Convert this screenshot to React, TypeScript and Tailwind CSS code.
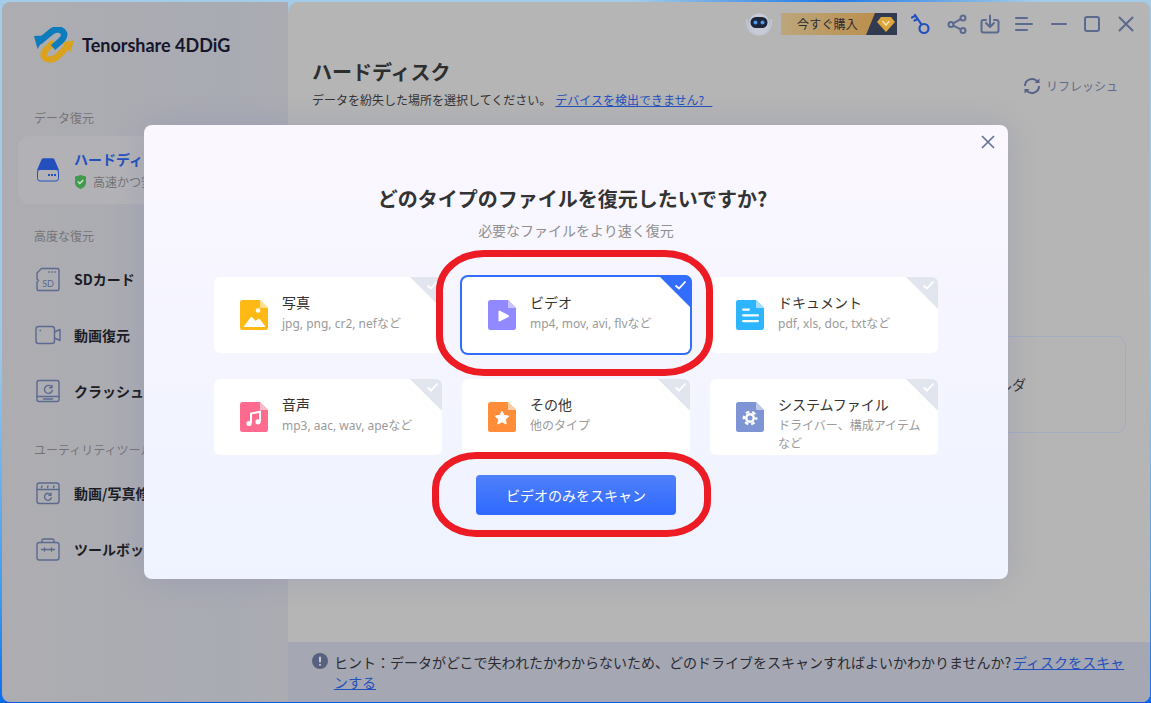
import React from "react";

const F = "[font-family:'Noto_Sans_CJK_JP','Noto_Sans',sans-serif]";

function FileIcon({ fill, fold, children }: { fill: string; fold: string; children: React.ReactNode }) {
  return (
    <svg width="28" height="30" viewBox="0 0 28 30" className="shrink-0 mt-[23px] ml-[26px]">
      <path d="M2.5 0H20L28 8V27.5A2.5 2.5 0 0 1 25.500 30H2.500A2.500 2.500 0 0 1 0 27.500V2.500A2.500 2.500 0 0 1 2.500 0Z" fill={fill} />
      <path d="M20 0L28 8H20Z" fill={fold} />
      {children}
    </svg>
  );
}

const icons: Record<string, React.ReactNode> = {
  photo: (
    <FileIcon fill="#ffb914" fold="#ffdf8e">
      <circle cx="18" cy="10.500" r="2.300" fill="#fff" />
      <path d="M3.500 27L10.500 17.500C11 16.800 12 16.800 12.500 17.500L15.500 21L18 19C18.500 18.600 19.200 18.600 19.700 19.100L25 26C25.300 26.500 25 27 24.500 27Z" fill="#fff" />
    </FileIcon>
  ),
  video: (
    <FileIcon fill="#9189ff" fold="#c9c4ff">
      <path d="M10.500 11.500C10.500 10.700 11.300 10.300 12 10.700L20.500 15.200C21.200 15.600 21.200 16.500 20.500 16.900L12 21.300C11.300 21.700 10.500 21.300 10.500 20.500Z" fill="#fff" />
    </FileIcon>
  ),
  doc: (
    <FileIcon fill="#2db5ff" fold="#a4dfff">
      <rect x="6" y="8.500" width="8" height="2.200" rx="1.100" fill="#fff" />
      <rect x="6" y="14.300" width="17" height="2.200" rx="1.100" fill="#fff" />
      <rect x="6" y="20" width="17" height="2.200" rx="1.100" fill="#fff" />
    </FileIcon>
  ),
  audio: (
    <FileIcon fill="#ff6b8f" fold="#ffbccb">
      <path d="M11 21V11.500L20 9.800V19.500" fill="none" stroke="#fff" strokeWidth="2" />
      <circle cx="9" cy="21.500" r="2.600" fill="#fff" />
      <circle cx="18" cy="19.800" r="2.600" fill="#fff" />
    </FileIcon>
  ),
  other: (
    <FileIcon fill="#ff8c38" fold="#ffcda6">
      <path d="M14 9.300L16.100 13.400L20.700 14.100L17.400 17.400L18.200 22L14 19.800L9.800 22L10.600 17.400L7.300 14.100L11.900 13.400Z" fill="#fff" stroke="#fff" strokeLinejoin="round" />
    </FileIcon>
  ),
  system: (
    <FileIcon fill="#7f94d4" fold="#bfcaea">
      <circle cx="14" cy="16" r="5" fill="#fff" />
      <circle cx="14" cy="16" r="6.200" fill="none" stroke="#fff" strokeWidth="2.400" strokeDasharray="3.500 2.990" strokeDashoffset="1.750" />
      <circle cx="14" cy="16" r="2.500" fill="#7f94d4" />
    </FileIcon>
  ),
};

function Card({ icon, title, desc, selected }: { icon: string; title: string; desc: string; selected?: boolean }) {
  return (
    <div className={`relative flex h-[76px] rounded-[6px] bg-white ${selected ? "ring-2 ring-[#336dff]" : ""}`}>
      {icons[icon]}
      <div className="ml-[14px] mt-[15px] w-[148px]">
        <div className="text-[14px] leading-[20px] text-[#333333]">{title}</div>
        <div className="mt-[3px] text-[12px] leading-[18px] text-[#9a9a9a] [font-family:'Noto_Sans','Noto_Sans_CJK_JP',sans-serif]">{desc}</div>
      </div>
      {selected ? (
        <div className="absolute -right-[2px] -top-[2px] h-[34px] w-[34px] rounded-tr-[7px] bg-[#336dff] [clip-path:polygon(0_0,100%_0,100%_100%)]" />
      ) : (
        <div className="absolute right-0 top-0 h-[32px] w-[32px] rounded-tr-[6px] bg-[#e1e5ee] [clip-path:polygon(0_0,100%_0,100%_100%)]" />
      )}
      <svg width="13" height="10" viewBox="0 0 13 10" className="absolute right-[3px] top-[3px]">
        <path d="M1.500 5.500L5 8.500L11.500 1.500" fill="none" stroke="#fff" strokeWidth="1.800" />
      </svg>
    </div>
  );
}

const S = { fill: "none", stroke: "#5b6a8f", strokeWidth: 1.4, strokeLinecap: "round" as const, strokeLinejoin: "round" as const };

function NavIcon({ children }: { children: React.ReactNode }) {
  return (
    <svg width="26" height="26" viewBox="0 0 26 26" className="shrink-0 overflow-visible" {...S}>
      {children}
    </svg>
  );
}

function NavRow({ label, icon }: { label: string; icon: React.ReactNode }) {
  return (
    <div className="flex h-[56px] items-center gap-[14px] pl-[32px]">
      <NavIcon>{icon}</NavIcon>
      <span className="text-[14px] font-bold text-[#1c1c24]">{label}</span>
    </div>
  );
}

function Logo() {
  return (
    <svg width="40" height="36" viewBox="0 0 40 36" className="shrink-0">
      <path d="M36 17L24 29C20 33 12.500 34 10 29.500C8.500 26 11 23.500 14 20.500L20 15" fill="none" stroke="#d9a31f" strokeWidth="6.500" />
      <path d="M40 13.500L27 15.500L36.500 25Z" fill="#d9a31f" />
      <path d="M5 15L17 5C21 1.500 28 1.500 30 6.500C31 10 28.500 12.500 25.500 15L19 20.500" fill="none" stroke="#0c7cbd" strokeWidth="6.500" />
      <path d="M0 9L12 8.500L3.500 22Z" fill="#0c7cbd" />
    </svg>
  );
}

function Sidebar() {
  return (
    <div className="flex w-[286px] shrink-0 flex-col bg-[linear-gradient(90deg,#adadb1,#a9abb3_80%,#abacb2)]">
      <div className="flex items-center gap-[8px] pl-[32px] pt-[25px]">
        <Logo />
        <span className="text-[18px] font-bold text-[#15152b] [font-family:'Lato','Noto_Sans',sans-serif]">Tenorshare 4DDiG</span>
      </div>
      <div className="mt-[46px] pl-[32px] text-[12px] leading-[18px] text-[#747478]">データ復元</div>
      <div className="ml-[16px] mr-[8px] mt-[9px] flex h-[68px] items-center gap-[15px] rounded-[12px] bg-[#b2b2b6] pl-[19px]">
        <svg width="22" height="24" viewBox="0 0 22 24" className="shrink-0">
          <path d="M4.500 1.500C5 .7 5.800 .3 6.700 .3H15.300C16.200 .3 17 .7 17.500 1.500L22 12H0Z" fill="#2350bd" />
          <rect x=".5" y="11.500" width="21" height="11.500" rx="2.500" fill="#b3b3b7" stroke="#2350bd" />
          <rect x="11" y="16" width="2" height="2" fill="#2350bd" />
          <rect x="14" y="16" width="2" height="2" fill="#2350bd" />
          <rect x="17" y="16" width="2" height="2" fill="#2350bd" />
        </svg>
        <div>
          <div className="text-[14px] font-bold leading-[20px] text-[#2350bd]">ハードディスク</div>
          <div className="mt-[4px] flex items-center gap-[6px] text-[12px] leading-[18px] text-[#737377]">
            <svg width="13" height="14" viewBox="0 0 13 14">
              <path d="M1 1.500L6.500 0L12 1.500V8C12 11 9 13 6.500 14C4 13 1 11 1 8Z" fill="#429a4f" />
              <path d="M3.800 6.500L5.800 8.500L9.300 5" fill="none" stroke="#cfe6d2" strokeWidth="1.300" />
            </svg>
            高速かつ安全
          </div>
        </div>
      </div>
      <div className="mt-[23px] pl-[32px] text-[12px] leading-[18px] text-[#747478]">高度な復元</div>
      <div className="mt-[6px]">
        <NavRow
          label="SDカード"
          icon={
            <>
              <path d="M7.500 2.500H23.500A1.500 1.500 0 0 1 25 4V23A1.500 1.500 0 0 1 23.500 24.500H4.500A1.500 1.500 0 0 1 3 23V16L4.500 14.500L3 13V7Z" />
              <path d="M15 6h.5M18 6h.5M21 6h.5" />
              <text x="14" y="20.500" textAnchor="middle" fontSize="9" fontFamily="Lato" fill="#5b6a8f" stroke="none">SD</text>
            </>
          }
        />
        <NavRow
          label="動画復元"
          icon={
            <>
              <rect x="2" y="4.500" width="18.500" height="17" rx="2.500" />
              <path d="M20.500 10L26 7.500V18.500L20.500 16" />
              <path d="M6 8.500h.5" />
            </>
          }
        />
        <NavRow
          label="クラッシュPC"
          icon={
            <>
              <rect x="3" y="2.500" width="22" height="21" rx="2" />
              <path d="M3 18.500H25M9.500 21H18.500" />
              <path d="M18 9.500A4 4 0 1 0 18.300 12.500M18 7.500V9.800H15.700" />
            </>
          }
        />
      </div>
      <div className="mt-[22px] pl-[32px] text-[12px] leading-[18px] text-[#747478]">ユーティリティツール</div>
      <div className="mt-[6px]">
        <NavRow
          label="動画/写真修復"
          icon={
            <>
              <rect x="3" y="3" width="22" height="20.500" rx="2.500" />
              <path d="M3 9.500H25M8 6l-.5 1.500M14 6l-.5 1.500M20 6l-.5 1.500" />
              <path d="M17 15A3.500 3.500 0 1 0 17.300 18M17 13.200V15.300H14.900" />
            </>
          }
        />
        <NavRow
          label="ツールボックス"
          icon={
            <>
              <rect x="3" y="6.500" width="22" height="17.500" rx="2.500" />
              <path d="M8 6.500V4.500C8 3.500 8.800 3 9.500 3H18.500C19.200 3 20 3.500 20 4.500V6.500" />
              <path d="M7.500 13.500H20.500M10.500 12V15M17.500 12V15" />
            </>
          }
        />
      </div>
    </div>
  );
}

const T = { fill: "none", stroke: "#5b6a8f", strokeWidth: 2, strokeLinecap: "round" as const, strokeLinejoin: "round" as const };

function TopBar() {
  return (
    <div className="flex h-[44px] shrink-0 items-center pr-[16px]">
      <div className="ml-auto" />
      <svg width="28" height="26" viewBox="0 0 28 26" className="mr-[8px]">
        <path d="M2 8C1 14 3 23 14 24C25 23 27 14 26 8" fill="none" stroke="#c4c8d6" strokeWidth="1.500" />
        <circle cx="14" cy="13" r="10.500" fill="#c7cbd8" />
        <rect x="5.500" y="6" width="17" height="11" rx="5.500" fill="#1d2338" />
        <circle cx="10.500" cy="11.500" r="2" fill="#4d9be8" />
        <circle cx="17.500" cy="11.500" r="2" fill="#4d9be8" />
      </svg>
      <div className="relative flex h-[22px] w-[116px] items-center bg-[linear-gradient(90deg,#bca67c,#bb8a42)] pl-[16px] text-[12px] tracking-[.2px] text-[#2b2b33]">
        今すぐ購入
        <div className="absolute inset-y-0 right-0 w-[31px] bg-[#323a50] [clip-path:polygon(9px_0,100%_0,100%_100%,0_100%)]" />
        <svg width="18" height="16" viewBox="0 0 18 16" className="absolute right-[2px] top-[3px]">
          <path d="M4 1H14L18 6L9 16L0 6Z" fill="#dca43c" />
          <path d="M5.500 5L9 9L12.500 5" fill="none" stroke="#f8e2b0" strokeWidth="1.500" />
        </svg>
      </div>
      <svg width="20" height="22" viewBox="0 0 20 22" className="ml-[14px]" fill="none" stroke="#2350bd" strokeWidth="2.200" strokeLinecap="round">
        <circle cx="13" cy="15.500" r="4.500" />
        <path d="M10.500 11.500L4 2M4 3L1 4.500M6.500 6L3.500 7.500" />
      </svg>
      <svg width="20" height="20" viewBox="0 0 20 20" className="ml-[16px]" {...T}>
        <circle cx="16" cy="4" r="2.500" />
        <circle cx="4" cy="10.500" r="2.500" />
        <circle cx="16" cy="16.500" r="2.500" />
        <path d="M6.200 9.300L13.800 5.200M6.200 11.700L13.800 15.300" />
      </svg>
      <svg width="20" height="20" viewBox="0 0 20 20" className="ml-[13px]" {...T}>
        <path d="M6 6H3.500A2 2 0 0 0 1.500 8V16.500A2 2 0 0 0 3.500 18.500H16.500A2 2 0 0 0 18.500 16.500V8A2 2 0 0 0 16.500 6H14" />
        <path d="M10 1.500V12.500M6 9L10 13L14 9" />
      </svg>
      <svg width="18" height="16" viewBox="0 0 18 16" className="ml-[15px]" {...T}>
        <path d="M1 2H12M1 8H17M1 14H12" />
      </svg>
      <svg width="16" height="16" viewBox="0 0 16 16" className="ml-[18px]" {...T}>
        <path d="M1 8H15" />
      </svg>
      <svg width="16" height="16" viewBox="0 0 16 16" className="ml-[17px]" {...T}>
        <rect x="1" y="1" width="14" height="14" rx="2" />
      </svg>
      <svg width="16" height="16" viewBox="0 0 16 16" className="ml-[18px]" {...T}>
        <path d="M1.500 1.500L14.500 14.500M14.500 1.500L1.500 14.500" />
      </svg>
    </div>
  );
}

function Main() {
  return (
    <div className="flex min-w-0 flex-1 flex-col rounded-tl-[10px] bg-[#b5b5b5]">
      <TopBar />
      <div className="flex items-start justify-between pl-[24px] pr-[32px] pt-[12px]">
        <div>
          <div className="text-[20px] font-bold leading-[28px] text-[#2e2e2e]">ハードディスク</div>
          <div className="mt-[5px] text-[12px] leading-[18px] text-[#333333]">
            データを紛失した場所を選択してください。
            <span className="ml-[4px] whitespace-pre text-[#2350bd] underline">デバイスを検出できません?   </span>
          </div>
        </div>
        <div className="mt-[19px] flex items-center gap-[5px] text-[12px] text-[#5f6b88]">
          <svg width="18" height="18" viewBox="0 0 18 18" fill="none" stroke="#556385" strokeWidth="2">
            <path d="M2 9A7 7 0 0 1 14.500 4.700M16 9A7 7 0 0 1 3.500 13.300" />
            <path d="M11.500 6H16.500V1.500Z" fill="#556385" stroke="none" />
            <path d="M6.500 12H1.500V16.500Z" fill="#556385" stroke="none" />
          </svg>
          リフレッシュ
        </div>
      </div>
      <div className="mr-[24px] ml-auto mt-[227px] flex h-[97px] w-[278px] items-center rounded-[10px] border border-[#a5acc2] pl-[121px] text-[14px] text-[#333333]">
        フォルダ
      </div>
      <div className="mt-auto flex h-[60px] items-start gap-[6px] bg-[#a5a8b2] pl-[24px] pr-[22px] pt-[10px] text-[14px] leading-[20px] text-[#2b2b33]">
        <svg width="16" height="16" viewBox="0 0 16 16" className="mt-[1px] shrink-0">
          <circle cx="8" cy="8" r="8" fill="#56617f" />
          <rect x="7" y="3.500" width="2" height="6" rx="1" fill="#c7cad3" />
          <rect x="7" y="10.800" width="2" height="2" rx="1" fill="#c7cad3" />
        </svg>
        <div>
          ヒント：データがどこで失われたかわからないため、どのドライブをスキャンすればよいかわかりませんか?
          <span className="ml-[2px] text-[#2350bd] underline">ディスクをスキャンする</span>
        </div>
      </div>
    </div>
  );
}

function Modal() {
  return (
    <div className="absolute left-[144px] top-[125px] flex h-[454px] w-[864px] flex-col items-stretch rounded-[8px] bg-[linear-gradient(180deg,#fbf7ff,#eef3ff)] shadow-[0_0_30px_rgba(100,110,170,0.22)]">
      <svg width="14" height="14" viewBox="0 0 14 14" className="absolute right-[13px] top-[10px]" fill="none" stroke="#66749a" strokeWidth="1.700">
        <path d="M1 1L13 13M13 1L1 13" />
      </svg>
      <div className="mr-[7px] mt-[59px] text-center text-[20px] font-bold leading-[30px] text-[#333333]">どのタイプのファイルを復元したいですか?</div>
      <div className="mt-[6px] text-center text-[14px] leading-[20px] text-[#8f8f8f]">必要なファイルをより速く復元</div>
      <div className="mt-[37px] grid grid-cols-3 gap-x-[20px] gap-y-[26px] px-[70px]">
        <Card icon="photo" title="写真" desc="jpg, png, cr2, nefなど" />
        <Card icon="video" title="ビデオ" desc="mp4, mov, avi, flvなど" selected />
        <Card icon="doc" title="ドキュメント" desc="pdf, xls, doc, txtなど" />
        <Card icon="audio" title="音声" desc="mp3, aac, wav, apeなど" />
        <Card icon="other" title="その他" desc="他のタイプ" />
        <Card icon="system" title="システムファイル" desc="ドライバー、構成アイテムなど" />
      </div>
      <div className="mx-auto mt-[20px] flex h-[40px] w-[200px] items-center justify-center rounded-[4px] bg-[linear-gradient(180deg,#4f80fb,#2f69ff)] text-[14px] text-white">
        ビデオのみをスキャン
      </div>
    </div>
  );
}

export default function App() {
  return (
    <div className={`relative h-[703px] w-[1151px] overflow-hidden bg-[linear-gradient(180deg,#a4cce8_0%,#9cc8e8_50%,#3d9af0_85%,#0a6cf0_100%)] ${F}`}>
      <div className="absolute inset-x-0 top-0 h-[2px] bg-[linear-gradient(90deg,#a4cce8_0%,#a4cce8_55%,#1f7ae8_72%,#a4cce8_90%)]" />
      <div className="absolute bottom-0 inset-x-0 h-[1px] bg-[#0a5ce0]" />
      <div className="absolute inset-y-[2px] left-[2px] right-[1px] bottom-[1px] flex overflow-hidden rounded-[8px]">
        <Sidebar />
        <Main />
      </div>
      <Modal />
      <div className="absolute left-[436px] top-[250px] h-[126px] w-[277px] rounded-[48px/40px] border-[7px] border-[#ed1c24]" />
      <div className="absolute left-[432px] top-[452px] h-[85px] w-[279px] rounded-[44px/36px] border-[7px] border-[#ed1c24]" />
    </div>
  );
}
